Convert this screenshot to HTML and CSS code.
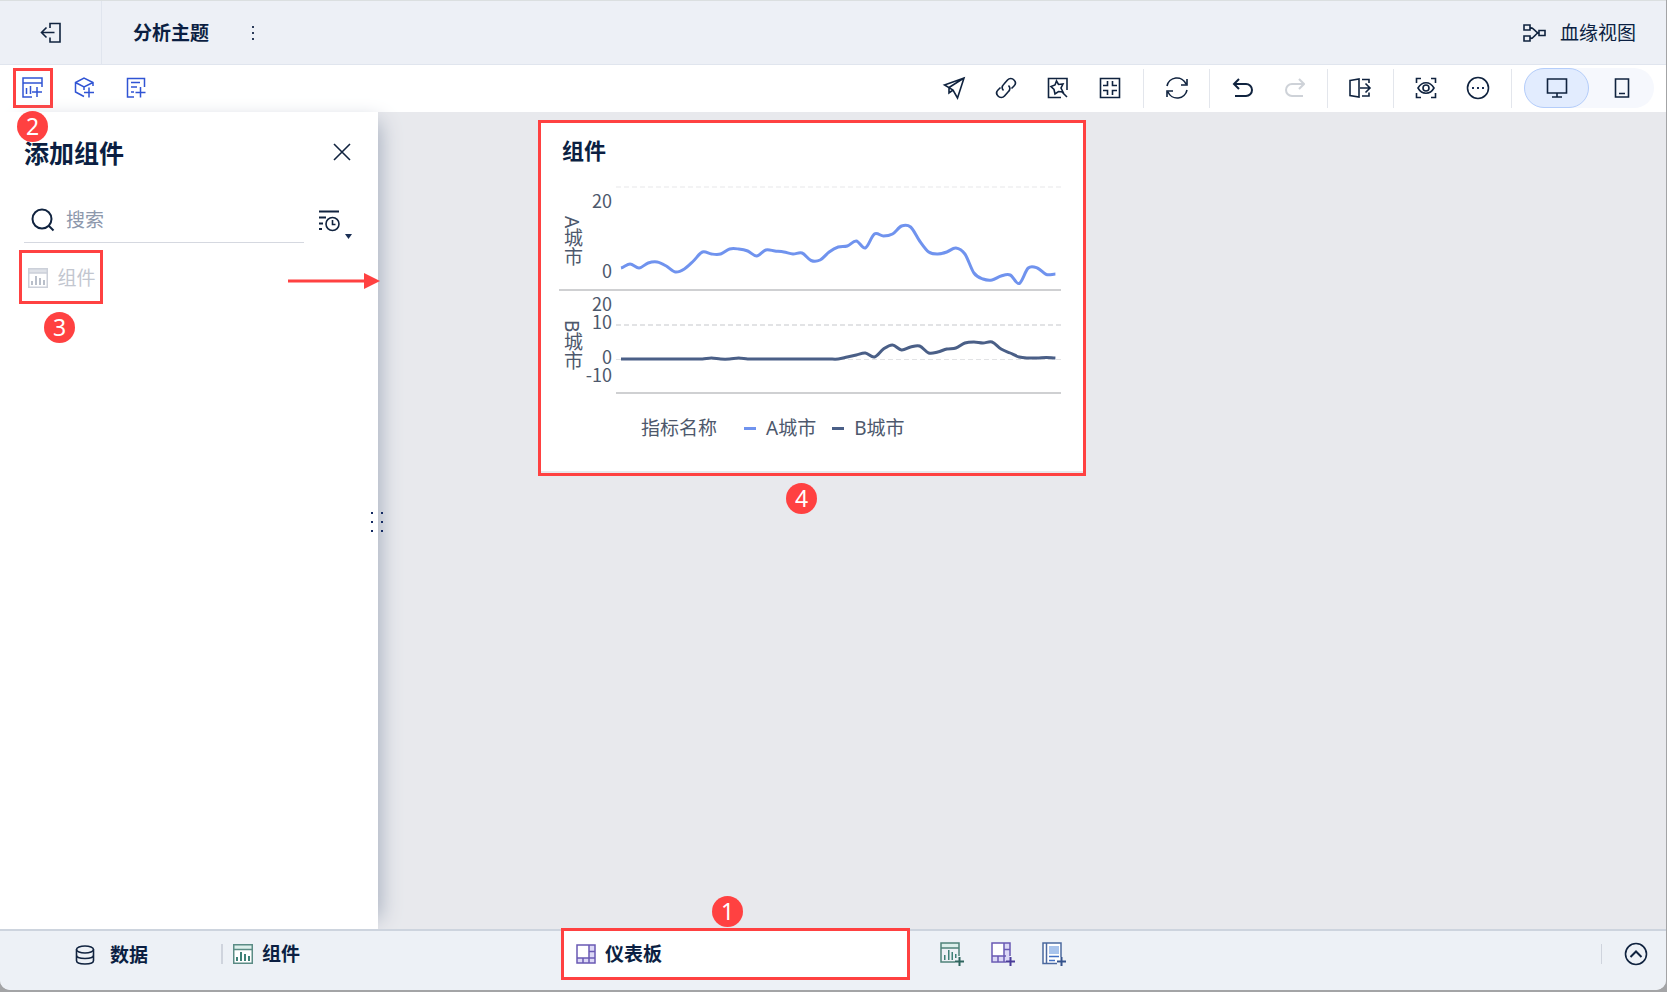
FILE: index.html
```html
<!DOCTYPE html>
<html lang="zh-CN">
<head>
<meta charset="utf-8">
<title>分析主题</title>
<link rel="stylesheet" href="styles.css">
</head>
<body>
<div class="window">
  <header class="header">
    <button class="exit" aria-label="退出">
      <svg class="icon" width="22" height="22" viewBox="0 0 22 22"><path d="M10 6V1.500h10v18.500H10v-4.500M14.500 10.500H1.500M6.500 5.500l-5 5 5 5"/></svg>
    </button>
    <h1 class="subject">分析主题</h1>
    <button class="more" aria-label="更多"><svg width="4" height="14" viewBox="0 0 4 14"><path d="M1 0h2v2H1zM1 6h2v2H1zM1 12h2v2H1z"/></svg></button>
    <button class="lineage">
      <svg class="icon" width="24" height="20" viewBox="0 0 24 20"><path d="M2 2h6v5H2zM2 13h6v5H2zM17 7.500h6v5h-6zM8 4.500c5 0 4.500 5.500 9 5.500M8 15.500c5 0 4.500-5.500 9-5.500"/></svg>
      血缘视图
    </button>
  </header>

  <div class="toolbar">
    <div class="inserts">
      <button class="insert marked" aria-label="添加组件">
        <svg width="22" height="22" viewBox="0 0 22 22"><path d="M10 20H1V1h19v9M1 6h19M4.500 11v6M8.500 9v8M15 10v10M10 15h10"/></svg>
        <span class="badge badge-two">2</span>
      </button>
      <button class="insert" aria-label="添加模型">
        <svg width="22" height="22" viewBox="0 0 22 22"><path d="M10 19.500L1.500 15V5.500L10 1l9 4.500V9M1.500 5.500L10 10l9-4.500M10 10v3M15 10.500v10M10 15.500h10"/></svg>
      </button>
      <button class="insert" aria-label="添加文本">
        <svg width="22" height="22" viewBox="0 0 22 22"><path d="M8 20H1.500V1.500h17V10M5 5.500h9M5 10h6M5 15h3M14.500 10v10.500M9.500 15.500h10"/></svg>
      </button>
    </div>
    <div class="actions">
      <button aria-label="发布"><svg class="icon" width="24" height="24" viewBox="0 0 24 24"><path d="M2.500 9L22 2l-6.500 20-4.500-8zM22 2L7 11.500V17l4-3"/></svg></button>
      <button aria-label="链接"><svg class="icon" width="22" height="22" viewBox="0 0 22 22"><path d="M8.500 13.500C6 11 7.500 8.500 9 7l3.500-4a4.300 4.300 0 0 1 6.500 0c2 2 1.500 4.500 0 6L16.500 11.500M13.500 8.500c2.500 2.500 1 5-.5 6.500l-3.500 4a4.300 4.300 0 0 1-6.500 0c-2-2-1.500-4.500 0-6L5.500 10.500"/></svg></button>
      <button aria-label="样式"><svg class="icon" width="22" height="22" viewBox="0 0 22 22"><path d="M20 13V1.500H1.500v19H14M15 15l5 5M9.500 4l2 3.500 4.500-.5-2 4 2 4-4.500-.5-3.500 2.500-1-4.500-3-3 4-1.500z"/></svg></button>
      <button aria-label="缩放"><svg class="icon" width="22" height="22" viewBox="0 0 22 22"><path d="M1.500 1.500h19v19h-19zM8.500 4v4.500H4M13.500 4v4.500H18M8.500 18v-4.500H4M13.500 18v-4.500H18"/></svg></button>
      <i class="rule"></i>
      <button aria-label="刷新"><svg class="icon" width="24" height="24" viewBox="0 0 24 24"><path d="M3 10a10 10 0 0 1 19-2M23 3v6h-6M23 14a10 10 0 0 1-19 2M3 21v-6h6"/></svg></button>
      <i class="rule"></i>
      <button aria-label="撤销"><svg class="icon bold" width="22" height="22" viewBox="0 0 22 22"><path d="M8 2L3 7l5 5M3 7h12a6 6 0 0 1 0 12H4"/></svg></button>
      <button aria-label="重做" disabled><svg class="icon bold" width="22" height="22" viewBox="0 0 22 22"><path d="M16 2l5 5-5 5M21 7H9a6 6 0 0 0 0 12h11"/></svg></button>
      <i class="rule"></i>
      <button aria-label="导出"><svg class="icon" width="24" height="22" viewBox="0 0 24 22"><path d="M2 3.500L11 2v18L2 18.500zM14 2.500h7V6M14 19h7v-3.500M12 11h10M17.500 6.500L22 11l-4.500 4.500"/></svg></button>
      <i class="rule"></i>
      <button aria-label="预览"><svg class="icon" width="22" height="22" viewBox="0 0 22 22"><path d="M1.500 6V1.500H6M16 1.500h4.500V6M1.500 16v4.500H6M16 20.500h4.500V16M3 11c4-7 12-7 16 0-4 7-12 7-16 0z"/><circle cx="11" cy="11" r="3"/></svg></button>
      <button aria-label="更多操作"><svg class="icon" width="24" height="24" viewBox="0 0 24 24"><circle cx="12" cy="12" r="10.500"/><path class="fill" d="M6 11h2v2H6zM11 11h2v2h-2zM16 11h2v2h-2z"/></svg></button>
      <i class="rule"></i>
      <div class="devices">
        <button class="device active" aria-label="桌面端"><svg class="icon" width="22" height="22" viewBox="0 0 22 22"><path d="M1.500 2h19v14h-19zM11 16v4M6 20h10"/></svg></button>
        <button class="device" aria-label="移动端"><svg class="icon" width="16" height="22" viewBox="0 0 16 22"><path d="M1.500 2h13v18h-13zM5 16.500h6"/></svg></button>
      </div>
    </div>
  </div>

  <main class="main">
    <aside class="panel">
      <div class="panel-head">
        <h2 class="panel-title">添加组件</h2>
        <button class="close" aria-label="关闭"><svg class="icon" width="18" height="18" viewBox="0 0 18 18"><path d="M1 1l16 16M17 1L1 17"/></svg></button>
      </div>
      <div class="search-row">
        <label class="search">
          <svg class="icon bold" width="24" height="24" viewBox="0 0 24 24"><circle cx="11" cy="11" r="9.500"/><path d="M17.500 17.500l5 5"/></svg>
          <input type="text" placeholder="搜索" aria-label="搜索">
        </label>
        <button class="sort" aria-label="排序">
          <svg class="icon" width="36" height="30" viewBox="0 0 36 30"><path class="thick" d="M1 2.500h20M1 8.500h7M1 14.500h4M1 20h3"/><circle cx="14.500" cy="15" r="6.500"/><path d="M14.500 11v4.500h3"/><path class="fill" d="M27 25h7l-3.500 5z"/></svg>
        </button>
      </div>
      <button class="item">
        <svg width="20" height="20" viewBox="0 0 20 20"><path d="M0 0h20v5H0z" fill="#dfe2e8"/><path d="M.75.75h18.500v18.500H.75zM0 5h20" fill="none" stroke="#ccd0d9" stroke-width="1.500"/><path d="M3 13h2v4H3zM7 8h2v9H7zM11 10h2v7h-2zM15 12h2v5h-2z" fill="#b9bfca"/></svg>
        组件
        <span class="badge badge-three">3</span>
      </button>
      <svg class="arrow" width="92" height="16" viewBox="0 0 92 16"><path d="M0 8h78" stroke="#ff4141" stroke-width="3"/><path d="M76 0l16 8-16 8z" fill="#ff4141"/></svg>
      <svg class="grip" width="14" height="20" viewBox="0 0 14 20"><path d="M1 0h2v2H1zM11 0h2v2h-2zM1 9h2v2H1zM11 9h2v2h-2zM1 18h2v2H1zM11 18h2v2h-2z"/></svg>
    </aside>

    <section class="canvas">
      <article class="card">
        <h3 class="card-title">组件</h3>
        <svg class="chart" viewBox="0 0 502 224">
          <path class="grid faint" d="M57 7h445"/>
          <path class="grid" d="M57 145h445"/>
          <path class="grid thin" d="M57 179.500h445"/>
          <path class="axis" d="M0 110h502M57 213h445"/>
          <g class="ticks">
            <text x="53" y="28">20</text><text x="53" y="98">0</text>
            <text x="53" y="131">20</text><text x="53" y="149">10</text>
            <text x="53" y="184">0</text><text x="53" y="202">-10</text>
          </g>
          <text class="name" x="13" y="36">A城市</text>
          <text class="name" x="13" y="140">B城市</text>
          <path class="line line-a"/>
          <path class="line line-b"/>
        </svg>
        <div class="legend">
          <span class="legend-title">指标名称</span>
          <span class="key key-a">A城市</span>
          <span class="key key-b">B城市</span>
        </div>
        <span class="badge badge-four">4</span>
      </article>
    </section>
  </main>

  <footer class="footer">
    <button class="tab data">
      <svg class="icon" width="20" height="20" viewBox="0 0 20 20"><ellipse cx="10" cy="4.500" rx="8.500" ry="3.500"/><path d="M1.500 4.500v11c0 4.700 17 4.700 17 0v-11M1.500 10c0 4.700 17 4.700 17 0"/></svg>
      数据
    </button>
    <button class="tab comp">
      <svg width="20" height="20" viewBox="0 0 20 20"><path d="M.75.75h18.500v18.500H.75z" fill="#fff"/><path d="M1 1h18v4H1z" fill="#dcefeb"/><path d="M.75.75h18.500v18.500H.75zM0 5.500h20" fill="none" stroke="#5b8c85" stroke-width="1.500"/><path d="M3 13h2v4H3zM7 8h2v9H7zM11 10h2v7h-2zM15 12h2v5h-2z" fill="#3e8177"/></svg>
      组件
    </button>
    <div class="board">
      <button class="tab board-tab">
        <svg width="20" height="20" viewBox="0 0 20 20"><path d="M1 1h18v18H1z" fill="#dcd8f6"/><path d="M1 1h12v13H1z" fill="#fff"/><path d="M1 1h18v18H1zM13 1v13M1 14h18M13 7.500h6M7 14v5M13 14v5" fill="none" stroke="#6a5ab4" stroke-width="1.500"/></svg>
        仪表板
      </button>
      <span class="badge badge-one">1</span>
    </div>
    <div class="creates">
      <button aria-label="新建组件"><svg width="24" height="25" viewBox="0 0 24 25"><path d="M1 1h18v5H1z" fill="#dcefeb"/><path d="M15 20H1V1h18v13M1 6h18" fill="none" stroke="#4f837a" stroke-width="1.500"/><path d="M4 13h1.500v5H4zM8 8h1.500v10H8zM11.500 10H13v8h-1.500zM15 12h1.500v4H15z" fill="#3e8177"/><path d="M19.500 15v9M15 19.500h9" stroke="#2f665f" stroke-width="2"/></svg></button>
      <button aria-label="新建仪表板"><svg width="24" height="25" viewBox="0 0 24 25"><path d="M1 1h18v18H1z" fill="#dcd8f6"/><path d="M1 1h12v13H1z" fill="#fff"/><path d="M15 20H1V1h18v13M13 1v13M1 14h14M13 7.500h6M7 14v6M13 14v6" fill="none" stroke="#6a5ab4" stroke-width="1.500"/><path d="M19.500 15v9M15 19.500h9" stroke="#4a3d99" stroke-width="2"/></svg></button>
      <button aria-label="新建报告"><svg width="24" height="25" viewBox="0 0 24 25"><path d="M1 1h18v20H1z" fill="#fff"/><path d="M7 4h10v8H7z" fill="#a9c4ec"/><path d="M15 21.500H1V1h18v14M4.500 1v20" fill="none" stroke="#4b699f" stroke-width="1.500"/><path d="M7 14.500h10M7 18.500h6" stroke="#4170c4" stroke-width="1.500"/><path d="M19.500 15v9M15 19.500h9" stroke="#34538c" stroke-width="2"/></svg></button>
    </div>
    <button class="expand" aria-label="展开"><svg class="icon" width="24" height="24" viewBox="0 0 24 24"><circle cx="12" cy="12" r="10.500"/><path class="thick" d="M6.500 15L12 9.500l5.500 5.500"/></svg></button>
  </footer>
</div>
<script src="chart.js"></script>
</body>
</html>
```

FILE: styles.css
```css
* { box-sizing: border-box; }

body {
  margin: 0;
  background: #a3a4a6;
  color: #0b1f42;
  font: 19px/28px "Noto Sans", "Noto Sans CJK SC", sans-serif;
}

h1, h2, h3 { margin: 0; font-weight: 700; }

button {
  display: flex;
  align-items: center;
  justify-content: center;
  padding: 0;
  border: 0;
  background: none;
  color: inherit;
  font: inherit;
}

svg { display: block; flex: none; }

.icon { fill: none; stroke: #10233f; stroke-width: 1.6; }
.icon.bold { stroke-width: 2; }
.icon .thick { stroke-width: 2; }
.icon .fill { fill: #1b2f55; stroke: none; }

.window {
  display: flex;
  flex-direction: column;
  height: calc(100vh - 2px);
  margin-right: 1px;
  border-radius: 0 0 10px 10px;
  background: #e8e9ed;
  overflow: hidden;
}

.header {
  display: flex;
  align-items: center;
  height: 65px;
  border-top: 1px solid #dbdfe0;
  border-bottom: 1px solid #e0e5ee;
  background: #edf0f6;
}

.exit {
  align-self: stretch;
  width: 102px;
  border-right: 1px solid #e0e5ee;
}

.subject { margin-left: 31px; font-size: 19px; }
.more { width: 24px; height: 24px; margin-left: 32px; fill: #2b3b59; }
.lineage { gap: 14px; margin-left: auto; margin-right: 30px; }

.toolbar {
  display: flex;
  align-items: center;
  justify-content: space-between;
  height: 47px;
  padding: 0 12px 1px 13px;
  background: #fff;
}

.inserts { display: flex; gap: 12px; }
.insert { position: relative; width: 40px; height: 40px; }
.insert svg { fill: none; stroke: #3054d4; stroke-width: 1.5; }
.marked { border: 3px solid #ff4141; }

.actions { display: flex; align-items: center; }
.actions button { width: 52px; height: 40px; }
.actions button:disabled { opacity: .2; }
.rule { width: 1px; height: 39px; margin: 0 6px 0 7px; background: #e3e6ec; }

.devices {
  display: flex;
  margin-left: 6px;
  border-radius: 20px;
  background: #f6f8fd;
}
.actions .device { width: 65px; border-radius: 20px; }
.actions .active { border: 1px solid #b4cdfa; background: #e2ecfe; }

.main { display: flex; flex: 1; min-height: 0; }

.panel {
  position: relative;
  width: 378px;
  padding: 24px 24px 0 24px;
  background: #fff;
  box-shadow: 12px 0 20px -10px #a4adbd;
}

.panel-head {
  display: flex;
  align-items: center;
  justify-content: space-between;
  padding-right: 3px;
  height: 34px;
}
.panel-title { font-size: 25px; }
.close { padding-bottom: 3px; }

.search-row { display: flex; gap: 14px; margin-top: 32px; }
.search {
  display: flex;
  align-items: center;
  gap: 11px;
  width: 280px;
  height: 41px;
  padding: 0 0 4px 7px;
  border-bottom: 1px solid #d5d8e0;
}
.search input {
  width: 200px;
  padding: 0;
  border: 0;
  outline: 0;
  background: none;
  font: inherit;
}
.search input::placeholder { color: #8d98ac; opacity: 1; }
.sort { align-self: flex-end; margin-bottom: 4px; }

.item {
  position: relative;
  gap: 9px;
  width: 84px;
  height: 54px;
  margin: 7px 0 0 -5px;
  padding: 2px 0 0 2px;
  border: 3px solid #ff4141;
  color: #c2c6cf;
}

.arrow { position: absolute; top: 161px; right: -2px; }
.grip { position: absolute; top: 49%; right: -6px; fill: #142a63; }

.canvas { flex: 1; padding: 8px 0 0 160px; }

.card {
  position: relative;
  width: 548px;
  height: 356px;
  padding: 11px 22px 0 18px;
  border: 3px solid #ff4141;
  background: #fff;
  box-shadow: inset 0 -2px #e8e9ed;
}
.card-title { padding-left: 3px; font-size: 22px; line-height: 32px; }

.chart { width: 100%; margin-top: 14px; }
.grid { fill: none; stroke: #e2e3e5; stroke-width: 2; stroke-dasharray: 5 3; }
.faint { stroke: #f3f3f4; }
.thin { stroke-width: 1; }
.axis { fill: none; stroke: #cfd0d2; stroke-width: 2; }
.ticks {
  fill: #4d586c;
  font-family: "Noto Sans CJK SC", sans-serif;
  font-size: 18px;
  text-anchor: end;
}
.name { fill: #4d586c; font-size: 19px; writing-mode: vertical-rl; }
.line { fill: none; stroke-width: 3; }
.line-a { stroke: #7093ee; }
.line-b { stroke: #4a5f87; }

.legend {
  display: flex;
  align-items: center;
  margin-top: 10px;
  padding-left: 82px;
  color: #4d586c;
}
.legend-title { margin-right: 27px; }
.key { display: flex; align-items: center; gap: 10px; margin-right: 16px; }
.key::before { content: ""; width: 12px; height: 3px; background: #7093ee; }
.key-b::before { background: #4a5f87; }

.badge {
  position: absolute;
  width: 31px;
  height: 31px;
  border-radius: 50%;
  background: #ff4141;
  color: #fff;
  font-size: 23px;
  font-weight: 400;
  line-height: 31px;
  text-align: center;
}
.badge-one { top: -35px; left: 148px; }
.badge-two { top: 40px; left: 1px; z-index: 2; }
.badge-three { top: 59px; left: 22px; }
.badge-four { top: 360px; left: 245px; }

.footer {
  display: flex;
  height: 61px;
  border-top: 2px solid #cdd4de;
  background: #edf1f6;
  position: relative;
}
.tab { height: 48px; font-weight: 700; }
.data { gap: 15px; margin-left: 75px; }
.comp { gap: 9px; height: 20px; margin: 13px 0 0 73px; padding-left: 10px; border-left: 2px solid #cfd4dd; }
.board {
  position: relative;
  width: 349px;
  height: 52px;
  margin: -3px 0 0 261px;
  border: 3px solid #ff4141;
  background: #fff;
}
.board-tab { gap: 9px; width: 100%; height: 46px; padding-left: 12px; justify-content: flex-start; }
.creates { display: flex; gap: 27px; height: 47px; margin-left: 30px; }
.expand {
  align-self: flex-start;
  height: 20px;
  margin: 13px 18px 0 auto;
  padding-left: 22px;
  border-left: 1px solid #cfd4dd;
}
```

FILE: chart.js
```js
const START = 62;
const STEP = 9.05;

const cityA = [88, 84, 88, 83, 82, 86, 92, 89, 81, 72, 74, 74, 69, 69, 71, 76, 70, 71, 72, 74, 73, 80.5, 80,
  72, 67, 66, 61, 68, 54, 56, 54, 46, 47, 61, 72, 74, 72, 68, 74, 93, 99, 100, 96, 95, 103.5, 88, 88, 94.5, 94];
const cityB = [179, 179, 179, 179, 179, 179, 179, 179, 179, 179, 178, 179, 179, 178, 179, 179, 179, 179, 179, 179,
  179, 179, 179, 179, 179, 177, 175, 173, 177, 169, 165, 170, 167, 166, 173, 172, 169, 168, 163, 162, 163, 162,
  169, 173, 177, 178, 178, 177.5, 178];

// Cubic curve through every point, eased at each peak and trough.
function curve(values) {
  const slope = values.map((v, i) => {
    const before = v - (values[i - 1] ?? v);
    const after = (values[i + 1] ?? v) - v;
    return (before + after) / 2;
  });
  let d = `M${START} ${values[0]}`;
  for (let i = 1; i < values.length; i++) {
    const x0 = START + (i - 1) * STEP;
    const x1 = START + i * STEP;
    d += `C${x0 + STEP / 3} ${values[i - 1] + slope[i - 1] / 3} ${x1 - STEP / 3} ${values[i] - slope[i] / 3} ${x1} ${values[i]}`;
  }
  return d;
}

document.querySelector(".line-a").setAttribute("d", curve(cityA));
document.querySelector(".line-b").setAttribute("d", curve(cityB));
```
